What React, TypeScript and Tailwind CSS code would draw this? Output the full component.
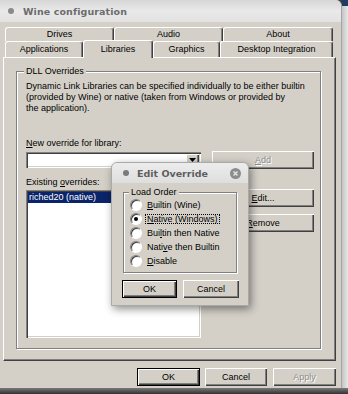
import React from "react";

const RAISED =
  "bg-[#d4d0c8] shadow-[inset_1px_1px_0_#ffffff,inset_-1px_-1px_0_#404040,inset_-2px_-2px_0_#808080]";
const SUNKEN =
  "shadow-[inset_1px_1px_0_#808080,inset_2px_2px_0_#404040,inset_-1px_-1px_0_#ffffff,inset_-2px_-2px_0_#d4d0c8]";

function Btn({
  children,
  className = "",
  def = false,
  disabled = false,
}: {
  children: React.ReactNode;
  className?: string;
  def?: boolean;
  disabled?: boolean;
}) {
  return (
    <div
      className={`${RAISED} ${def ? "border border-black" : ""} flex items-center justify-center h-[18px] ${
        disabled ? "text-[#8d8d8d] [text-shadow:1px_1px_0_#ffffff]" : "text-black"
      } ${className}`}
    >
      {children}
    </div>
  );
}

function Tab({
  children,
  w,
  selected = false,
}: {
  children: React.ReactNode;
  w: string;
  selected?: boolean;
}) {
  return (
    <div
      className={`${w} ${
        selected ? "h-[18px] mb-[-1px] relative z-10" : "h-full"
      } flex items-center justify-center bg-[#d4d0c8] border-t border-l border-r border-t-white border-l-white border-r-[#404040] rounded-t-[3px] shadow-[inset_-1px_0_0_#808080] text-black`}
    >
      {children}
    </div>
  );
}

function Radio({ checked = false }: { checked?: boolean }) {
  return (
    <div className="w-[12px] h-[12px] rounded-full bg-white border border-t-[#808080] border-l-[#808080] border-b-white border-r-white shadow-[inset_1px_1px_0_#404040,0_0_0_0_#d4d0c8] flex items-center justify-center">
      {checked && <div className="w-[4px] h-[4px] rounded-full bg-black" />}
    </div>
  );
}

function RadioRow({
  children,
  checked = false,
  focus = false,
}: {
  children: React.ReactNode;
  checked?: boolean;
  focus?: boolean;
}) {
  return (
    <div className="h-[14px] flex items-center pl-[6px] gap-[3px]">
      <Radio checked={checked} />
      <span
        className={`px-[1px] leading-[9px] h-[10px] ${
          focus ? "border border-dotted border-black" : "border border-transparent"
        }`}
      >
        {children}
      </span>
    </div>
  );
}

export default function App() {
  return (
    <div className="w-[348px] h-[394px] overflow-hidden relative bg-[#3e3e3e] font-['Liberation_Sans',Arial,sans-serif] text-[9px] leading-[11px] text-black">
      <div className="flex h-[388px]">
        {/* Main window */}
        <div className="w-[342px] h-full flex flex-col bg-[#d4d0c8] rounded-tr-[6px] overflow-hidden border-r border-[#a4a4a4]">
          {/* Title bar */}
          <div className="h-[22px] shrink-0 flex items-center bg-gradient-to-b from-[#d6d6d6] via-[#e9e9e9] to-[#e2e2e2] pl-[8px] gap-[9px]">
            <div className="w-[6px] h-[6px] rounded-full bg-[#8a8a8a]" />
            <span className="font-['DejaVu_Sans',sans-serif] font-bold text-[9.5px] text-[#6c6c6c] tracking-[0.1px]">
              Wine configuration
            </span>
          </div>

          {/* Body */}
          <div className="flex flex-col pl-[3px] pt-[5px]">
            {/* Tabs */}
            <div className="ml-[2px] flex flex-col">
              <div className="flex h-[14px]">
                <Tab w="w-[109px]">Drives</Tab>
                <Tab w="w-[109px]">Audio</Tab>
                <Tab w="w-[110px]">About</Tab>
              </div>
              <div className="flex items-end h-[16px]">
                <Tab w="w-[78px]">Applications</Tab>
                <Tab w="w-[70px]" selected>
                  Libraries
                </Tab>
                <Tab w="w-[67px]">Graphics</Tab>
                <Tab w="w-[113px]">Desktop Integration</Tab>
              </div>
            </div>

            {/* Panel */}
            <div className="w-[333px] h-[304px] border-t border-l border-white border-r border-b border-r-[#404040] border-b-[#404040] shadow-[inset_-1px_-1px_0_#808080] pl-[12px] pt-[13px]">
              {/* Group box */}
              <div className="w-[305px] h-[278px] border border-[#808080] shadow-[inset_1px_1px_0_#ffffff,1px_1px_0_#ffffff] flex flex-col pl-[9px]">
                <div className="-mt-[6px] w-fit bg-[#d4d0c8] px-[2px] -ml-[2px] h-[11px]">
                  DLL Overrides
                </div>
                <div className="mt-[4px] whitespace-nowrap">
                  <div>Dynamic Link Libraries can be specified individually to be either builtin</div>
                  <div>(provided by Wine) or native (taken from Windows or provided by</div>
                  <div>the application).</div>
                </div>
                <div className="mt-[24px] h-[11px]">
                  <u>N</u>ew override for library:
                </div>
                <div className="mt-[2px] flex items-center h-[18px]">
                  <div className={`w-[175px] h-[16px] bg-white ${SUNKEN} flex justify-end p-[2px]`}>
                    <div className={`w-[13px] h-[12px] ${RAISED} flex items-center justify-center`}>
                      <svg width="7" height="4" viewBox="0 0 7 4">
                        <path d="M0 0h7L3.5 4z" fill="#000" />
                      </svg>
                    </div>
                  </div>
                  <Btn className="ml-[11px] w-[102px]" disabled>
                    <span>
                      <u>A</u>dd
                    </span>
                  </Btn>
                </div>
                <div className="mt-[8px] flex">
                  <div className="flex flex-col">
                    <div className="h-[11px]">
                      Existing <u>o</u>verrides:
                    </div>
                    <div className={`mt-[2px] w-[175px] h-[148px] bg-white ${SUNKEN} p-[2px]`}>
                      <div className="h-[11px] bg-[#0a246a] text-white pl-[1px] leading-[11px]">
                        riched20 (native)
                      </div>
                    </div>
                  </div>
                  <div className="ml-[11px] flex flex-col">
                    <Btn className="mt-[12px] w-[102px]">
                      <span>
                        <u>E</u>dit...
                      </span>
                    </Btn>
                    <Btn className="mt-[7px] w-[102px]">
                      <span>
                        <u>R</u>emove
                      </span>
                    </Btn>
                  </div>
                </div>
              </div>
            </div>

            {/* Bottom buttons */}
            <div className="mt-[7px] ml-[134px] flex">
              <Btn def className="w-[63px]">
                OK
              </Btn>
              <Btn className="ml-[5px] w-[62px]">Cancel</Btn>
              <Btn className="ml-[6px] w-[63px]" disabled>
                Apply
              </Btn>
            </div>
          </div>
        </div>

        {/* Right desktop strip */}
        <div className="flex-1 flex flex-col">
          <div className="h-[6px] bg-[#1f3a63]" />
          <div className="flex-1 bg-gradient-to-r from-[#c4c4c4] to-[#e8e8e8]" />
        </div>
      </div>
      <div className="h-[6px] bg-gradient-to-b from-[#7a7a7a] to-[#333333]" />

      {/* Edit Override dialog */}
      <div className="absolute left-[111px] top-[162px] w-[138px] h-[144px] rounded-t-[6px] border border-[#a9a9a9] bg-[#d4d0c8] shadow-[2px_3px_8px_rgba(0,0,0,0.45)] flex flex-col overflow-hidden">
        <div className="h-[20px] shrink-0 flex items-center bg-gradient-to-b from-[#ececec] to-[#dedede] pl-[11px]">
          <div className="w-[6px] h-[6px] rounded-full bg-[#7a7a7a]" />
          <span className="ml-[8px] font-['DejaVu_Sans',sans-serif] font-bold text-[9.5px] text-[#5e5e5e]">
            Edit Override
          </span>
          <div className="ml-auto mr-[7px] w-[11px] h-[11px] rounded-full bg-[#8c8c8c] flex items-center justify-center">
            <svg width="5" height="5" viewBox="0 0 5 5">
              <path d="M0.5 0.5L4.5 4.5M4.5 0.5L0.5 4.5" stroke="#e6e6e6" strokeWidth="1.4" />
            </svg>
          </div>
        </div>
        <div className="flex flex-col pl-[11px] pt-[9px]">
          <div className="w-[114px] h-[81px] border border-[#808080] shadow-[inset_1px_1px_0_#ffffff,1px_1px_0_#ffffff] flex flex-col">
            <div className="-mt-[6px] ml-[5px] w-fit bg-[#d4d0c8] px-[2px] h-[11px]">
              Load Order
            </div>
            <RadioRow>
              <u>B</u>uiltin (Wine)
            </RadioRow>
            <RadioRow checked focus>
              <u>N</u>ative (Windows)
            </RadioRow>
            <RadioRow>
              Bui<u>l</u>tin then Native
            </RadioRow>
            <RadioRow>
              Nati<u>v</u>e then Builtin
            </RadioRow>
            <RadioRow>
              <u>D</u>isable
            </RadioRow>
          </div>
          <div className="mt-[7px] flex -ml-[1px]">
            <Btn def className="w-[55px]">
              OK
            </Btn>
            <Btn className="ml-[6px] w-[56px]">Cancel</Btn>
          </div>
        </div>
      </div>
    </div>
  );
}
